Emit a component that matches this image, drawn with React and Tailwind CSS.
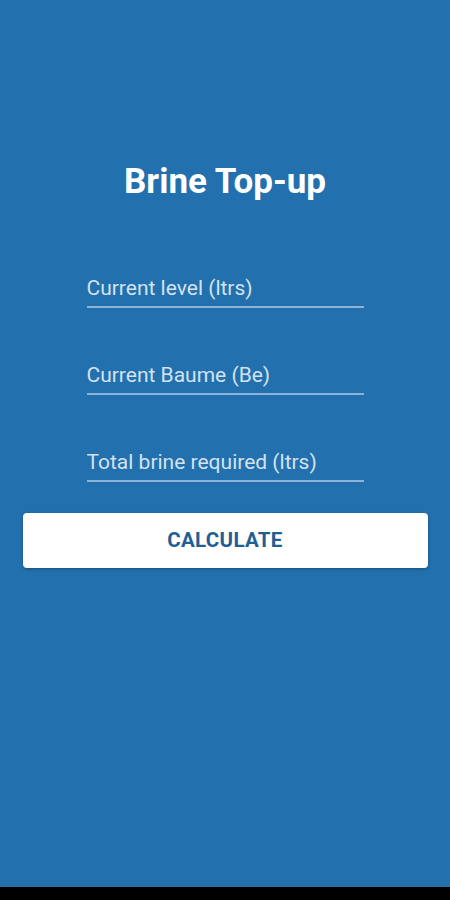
export default function App() {
  const fields = ['Current level (ltrs)', 'Current Baume (Be)', 'Total brine required (ltrs)'];
  return (
    <div className="w-[450px] h-[900px] flex flex-col bg-black" style={{ fontFamily: 'Roboto, "Liberation Sans", sans-serif' }}>
      <div className="flex-1 bg-[#2270ae] flex flex-col items-center">
        <h1 className="mt-[160px] text-[35px] leading-[44px] font-bold text-white">Brine Top-up</h1>
        <div className="mt-[71px] w-[277px] flex flex-col gap-[54px]">
          {fields.map((f) => (
            <div key={f} className="flex flex-col">
              <input
                placeholder={f}
                className="bg-transparent outline-none text-[21px] leading-[26px] pb-[5px] text-white placeholder:text-[#d3e2ef]"
              />
              <div className="h-[2px] bg-[#8db4d6]" />
            </div>
          ))}
        </div>
        <button className="mt-[31px] w-[405px] h-[55px] rounded-[4px] bg-white text-[#1f5f94] text-[20.5px] font-bold tracking-[0.3px] shadow-[0_1px_3px_rgba(0,0,0,0.3)]">
          CALCULATE
        </button>
      </div>
      <div className="h-[13px] bg-black" />
    </div>
  );
}
